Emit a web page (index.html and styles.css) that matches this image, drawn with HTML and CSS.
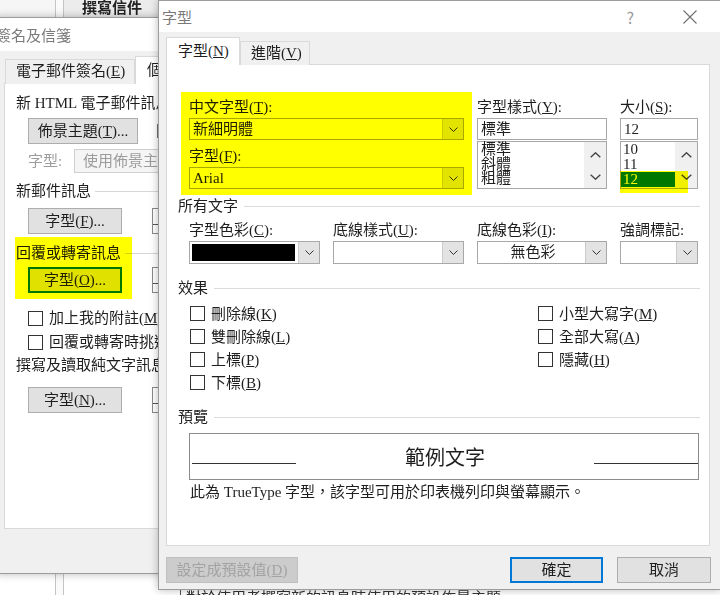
FILE: index.html
```html
<!DOCTYPE html>
<html lang="zh-Hant">
<head>
    <meta charset="UTF-8">
    <title>字型</title>
    <link rel="stylesheet" href="styles.css">
</head>
<body>
    <!-- outlook window behind both dialogs -->
    <div class="app">
        <div class="app-nav"></div>
        <div class="app-split"></div>
        <div class="app-main">
            <div class="app-head">撰寫信件</div>
            <div class="app-foot"><span class="foot-dash">一</span><span class="foot-bar"></span><span>對於使用者撰寫新的訊息時使用的預設佈景主題</span></div>
        </div>
    </div>

    <!-- 簽名及信箋 -->
    <div class="dlg sig">
        <div class="dlg-title">簽名及信箋</div>
        <div class="dlg-body">
            <div class="tabs">
                <div class="tab sig-tab">電子郵件簽名(<u>E</u>)</div>
                <div class="tab active sig-tab">個人信箋(<u>P</u>)</div>
            </div>
            <div class="panel sig-panel">
                <div class="sig-head">新 HTML 電子郵件訊息</div>
                <div class="sig-row">
                    <div class="btn w110"><span>佈景主題(<u>T</u>)...</span></div>
                    <span class="sig-note">目前沒有選取佈景主題</span>
                </div>
                <div class="sig-row sig-font">
                    <span class="dim-label">字型:</span>
                    <div class="dim-input">使用佈景主題的字型</div>
                </div>
                <div class="grp sig-grp"><span>新郵件訊息</span></div>
                <div class="sig-row r7">
                    <div class="btn"><span>字型(<u>F</u>)...</span></div>
                    <div class="sample"></div>
                </div>
                <div class="reply">
                    <div class="grp sig-grp"><span>回覆或轉寄訊息</span></div>
                    <div class="sig-row r4">
                        <div class="btn focus"><span>字型(<u>O</u>)...</span></div>
                        <div class="sample"></div>
                    </div>
                </div>
                <div class="chk sig-chk first"><span class="cb"></span><span>加上我的附註(<u>M</u>)</span></div>
                <div class="chk sig-chk"><span class="cb"></span><span>回覆或轉寄時挑選新的色彩(<u>C</u>)</span></div>
                <div class="sig-head r3">撰寫及讀取純文字訊息</div>
                <div class="sig-row r12">
                    <div class="btn"><span>字型(<u>N</u>)...</span></div>
                    <div class="sample"></div>
                </div>
            </div>
        </div>
    </div>

    <!-- 字型 -->
    <div class="dlg font">
        <div class="dlg-title">
            <span>字型</span>
            <span class="tb-help">?</span>
            <svg class="tb-close" width="14" height="14" viewBox="0 0 14 14"><path d="M0.5 0.5 L13.5 13.5 M13.5 0.5 L0.5 13.5" stroke="#6f6f6f" stroke-width="1.1" fill="none"/></svg>
        </div>
        <div class="dlg-body font-body">
            <div class="tabs font-tabs">
                <div class="tab active ft-tab">字型(<u>N</u>)</div>
                <div class="tab ft-tab2">進階(<u>V</u>)</div>
            </div>
            <div class="panel font-panel">
                <div class="ft-grid">
                    <div class="hl-block">
                        <div class="label">中文字型(<u>T</u>):</div>
                        <div class="combo">
                            <span class="combo-val">新細明體</span>
                            <span class="combo-btn"><svg width="9" height="5" viewBox="0 0 9 5"><path d="M0.5 0.5 L4.5 4.5 L8.5 0.5" stroke="#333" fill="none"/></svg></span>
                        </div>
                        <div class="label r6">字型(<u>F</u>):</div>
                        <div class="combo">
                            <span class="combo-val">Arial</span>
                            <span class="combo-btn"><svg width="9" height="5" viewBox="0 0 9 5"><path d="M0.5 0.5 L4.5 4.5 L8.5 0.5" stroke="#333" fill="none"/></svg></span>
                        </div>
                    </div>
                    <div class="ft-col">
                        <div class="label">字型樣式(<u>Y</u>):</div>
                        <div class="input">標準</div>
                        <div class="list">
                            <div class="list-items style-items">
                                <div>標準</div>
                                <div>斜體</div>
                                <div>粗體</div>
                            </div>
                            <div class="sbar">
                                <svg width="11" height="6" viewBox="0 0 11 6"><path d="M0.7 5.3 L5.5 0.8 L10.3 5.3" stroke="#444" stroke-width="1.4" fill="none"/></svg>
                                <svg width="11" height="6" viewBox="0 0 11 6"><path d="M0.7 0.7 L5.5 5.2 L10.3 0.7" stroke="#444" stroke-width="1.4" fill="none"/></svg>
                            </div>
                        </div>
                    </div>
                    <div class="ft-col">
                        <div class="label">大小(<u>S</u>):</div>
                        <div class="input">12</div>
                        <div class="list">
                            <div class="list-items size-items">
                                <div>10</div>
                                <div>11</div>
                                <div class="sel">12</div>
                            </div>
                            <div class="sbar">
                                <svg width="11" height="6" viewBox="0 0 11 6"><path d="M0.7 5.3 L5.5 0.8 L10.3 5.3" stroke="#444" stroke-width="1.4" fill="none"/></svg>
                                <svg width="11" height="6" viewBox="0 0 11 6"><path d="M0.7 0.7 L5.5 5.2 L10.3 0.7" stroke="#444" stroke-width="1.4" fill="none"/></svg>
                            </div>
                        </div>
                    </div>
                </div>

                <div class="grp ft-grp g1"><span>所有文字</span></div>
                <div class="ft-colors">
                    <div>
                        <div class="label">字型色彩(<u>C</u>):</div>
                        <div class="combo tall">
                            <span class="swatch"></span>
                            <span class="combo-btn"><svg width="9" height="5" viewBox="0 0 9 5"><path d="M0.5 0.5 L4.5 4.5 L8.5 0.5" stroke="#333" fill="none"/></svg></span>
                        </div>
                    </div>
                    <div>
                        <div class="label">底線樣式(<u>U</u>):</div>
                        <div class="combo tall">
                            <span class="combo-val"></span>
                            <span class="combo-btn"><svg width="9" height="5" viewBox="0 0 9 5"><path d="M0.5 0.5 L4.5 4.5 L8.5 0.5" stroke="#333" fill="none"/></svg></span>
                        </div>
                    </div>
                    <div>
                        <div class="label">底線色彩(<u>I</u>):</div>
                        <div class="combo tall">
                            <span class="combo-val center">無色彩</span>
                            <span class="combo-btn"><svg width="9" height="5" viewBox="0 0 9 5"><path d="M0.5 0.5 L4.5 4.5 L8.5 0.5" stroke="#333" fill="none"/></svg></span>
                        </div>
                    </div>
                    <div>
                        <div class="label">強調標記:</div>
                        <div class="combo tall">
                            <span class="combo-val"></span>
                            <span class="combo-btn"><svg width="9" height="5" viewBox="0 0 9 5"><path d="M0.5 0.5 L4.5 4.5 L8.5 0.5" stroke="#333" fill="none"/></svg></span>
                        </div>
                    </div>
                </div>

                <div class="grp ft-grp g2"><span>效果</span></div>
                <div class="effects">
                    <div class="fx-col">
                        <div class="chk"><span class="cb"></span><span>刪除線(<u>K</u>)</span></div>
                        <div class="chk"><span class="cb"></span><span>雙刪除線(<u>L</u>)</span></div>
                        <div class="chk"><span class="cb"></span><span>上標(<u>P</u>)</span></div>
                        <div class="chk"><span class="cb"></span><span>下標(<u>B</u>)</span></div>
                    </div>
                    <div class="fx-col">
                        <div class="chk"><span class="cb"></span><span>小型大寫字(<u>M</u>)</span></div>
                        <div class="chk"><span class="cb"></span><span>全部大寫(<u>A</u>)</span></div>
                        <div class="chk"><span class="cb"></span><span>隱藏(<u>H</u>)</span></div>
                    </div>
                </div>

                <div class="grp ft-grp g3"><span>預覽</span></div>
                <div class="pv-box">
                    <span class="pv-line"></span>
                    <span class="pv-text">範例文字</span>
                    <span class="pv-line"></span>
                </div>
                <div class="pv-note">此為 TrueType 字型，該字型可用於印表機列印與螢幕顯示。</div>
            </div>

            <div class="actions">
                <div class="btn btn-dis"><span>設定成預設值(<u>D</u>)</span></div>
                <div class="btn btn-ok">確定</div>
                <div class="btn btn-cancel">取消</div>
            </div>
        </div>
    </div>
</body>
</html>
```

FILE: styles.css
```css
* {
    box-sizing: border-box;
}

body {
    margin: 0;
    width: 720px;
    height: 595px;
    overflow: hidden;
    position: relative;
    background-color: #fff;
    font-family: "Liberation Serif", "Noto Sans CJK TC", serif;
    font-size: 15px;
    line-height: 20px;
    color: #1e1e1e;
}

u {
    text-decoration: underline;
}

/* background app window */
.app {
    position: absolute;
    top: 0;
    left: 0;
    width: 720px;
    height: 595px;
    display: flex;
}

.app-nav {
    width: 56px;
    border-right: 1px solid #c4c4c4;
    background: linear-gradient(#f6f6f6 0 17px, #fff 17px);
}

.app-split {
    width: 8px;
    border-right: 1px solid #c4c4c4;
    background-color: #fafafa;
}

.app-main {
    flex: 1;
    display: flex;
    flex-direction: column;
}

.app-head {
    height: 17px;
    padding-left: 18px;
    background-color: #ececec;
    font-family: "Noto Sans CJK TC", sans-serif;
    font-weight: bold;
    line-height: 13px;
    color: #222;
}

.app-foot {
    margin-top: auto;
    margin-bottom: -13px;
    padding-left: 96px;
    display: flex;
    align-items: center;
    white-space: nowrap;
    color: #333;
}

.foot-bar {
    width: 1px;
    height: 20px;
    margin: 0 5px;
    background-color: #555;
}

/* dialogs */
.dlg {
    position: absolute;
    display: flex;
    flex-direction: column;
    background-color: #f0f0f0;
    border: 1px solid #9c9c9c;
    box-shadow: 0 0 8px rgba(0, 0, 0, 0.28);
}

.dlg-title {
    display: flex;
    align-items: center;
    height: 32px;
    background-color: #fff;
    font-family: "Noto Sans CJK TC", sans-serif;
    color: #7a7a7a;
    white-space: nowrap;
}

.dlg-body {
    flex: 1;
    padding: 5px 7px 0;
}

.tabs {
    display: flex;
    align-items: flex-end;
    height: 28px;
    margin-bottom: -1px;
}

.tab {
    height: 25px;
    padding-left: 10px;
    border: 1px solid #d9d9d9;
    border-bottom: none;
    background-color: #f0f0f0;
    line-height: 22px;
    white-space: nowrap;
}

.tab.active {
    position: relative;
    height: 28px;
    background-color: #fff;
    line-height: 26px;
}

.panel {
    background-color: #fff;
    border: 1px solid #d9d9d9;
}

.btn {
    display: flex;
    align-items: center;
    justify-content: center;
    width: 94px;
    height: 26px;
    border: 1px solid #adadad;
    background-color: #e1e1e1;
    white-space: nowrap;
}

.w110 {
    width: 110px;
}

.btn.focus {
    border: 2px solid #0078d7;
}

.grp {
    display: flex;
    align-items: center;
    gap: 6px;
    height: 20px;
    white-space: nowrap;
}

.grp::after {
    content: "";
    flex: 1;
    height: 1px;
    background-color: #dcdcdc;
}

.chk {
    display: flex;
    align-items: center;
    gap: 6px;
    white-space: nowrap;
}

.cb {
    flex-shrink: 0;
    width: 15px;
    height: 15px;
    border: 1px solid #333;
    background-color: #fff;
}

/* 簽名及信箋 */
.sig {
    left: -4px;
    top: 17px;
    width: 480px;
    height: 557px;
}

.sig .dlg-title {
    text-indent: -1px;
    height: 33px;
}

.sig .tabs {
    padding-left: 1px;
}

.sig-tab {
    width: 130px;
}

.sig-tab.active {
    width: 120px;
    padding-left: 11px;
}

.sig-panel {
    height: 446px;
    padding: 9px 0 0 11px;
}

.sig-head {
    white-space: nowrap;
}

.sig-row {
    display: flex;
    align-items: center;
    height: 26px;
    margin-top: 5px;
    padding-left: 12px;
}

.sig-note {
    margin-left: 17px;
    white-space: nowrap;
}

.sig-font {
    height: 24px;
}

.dim-label {
    width: 46px;
    color: #9c9c9c;
}

.dim-input {
    width: 300px;
    height: 24px;
    padding-left: 8px;
    border: 1px solid #cfcfcf;
    background-color: #f5f5f5;
    color: #9c9c9c;
    line-height: 22px;
}

.sig-grp {
    margin-top: 8px;
    gap: 4px;
}

.sig-grp::after {
    background-color: #d6d6d6;
}

.r3 { margin-top: 3px; }
.r4 { margin-top: 4px; }
.r6 { margin-top: 6px; }
.r7 { margin-top: 7px; }
.r12 { margin-top: 12px; }

.sample {
    position: relative;
    flex-shrink: 0;
    width: 200px;
    height: 26px;
    margin-left: 30px;
    border: 1px solid #8a8a8a;
    background-color: #fff;
}

.sample::after {
    content: "";
    position: absolute;
    left: 0;
    top: 15px;
    width: 60px;
    height: 1px;
    background-color: #555;
}

.reply {
    position: relative;
    margin-top: 9px;
}

.reply .sig-grp {
    margin-top: 0;
}

/* marker highlight laid over the dialog */
.reply::after,
.hl-block::after,
.size-items .sel::after {
    content: "";
    position: absolute;
    background-color: #ffff00;
    mix-blend-mode: multiply;
    pointer-events: none;
}

.reply::after {
    left: -1px;
    top: -6px;
    width: 117px;
    height: 62px;
}

.sig-chk {
    height: 20px;
    margin-top: 4px;
    padding-left: 12px;
}

.sig-chk.first {
    margin-top: 15px;
}

/* 字型 */
.font {
    left: 158px;
    top: 0;
    width: 563px;
    height: 590px;
}

.font .dlg-title {
    height: 31px;
    padding-left: 3px;
}

.tb-help {
    margin-left: auto;
    margin-right: 49px;
    font-size: 16px;
    color: #9a9a9a;
}

.tb-close {
    margin-right: 23px;
}

.font-body {
    padding: 7px 9px 0 7px;
}

.font-tabs {
    height: 26px;
}

.ft-tab {
    width: 74px;
    height: 26px;
    padding-left: 11px;
    line-height: 24px;
}

.ft-tab2 {
    width: 70px;
    height: 24px;
    line-height: 22px;
}

.font-panel {
    width: 544px;
    height: 482px;
}

.ft-grid,
.ft-colors {
    display: grid;
    grid-template-columns: 131px 131px 130px 78px;
    column-gap: 13px;
    margin-left: 22px;
}

.ft-grid {
    margin-top: 27px;
}

.label {
    height: 20px;
    white-space: nowrap;
}

.hl-block {
    position: relative;
    grid-column: span 2;
    margin: 0 -8px;
    padding: 5px 8px 6px;
}

.hl-block::after {
    left: 0;
    top: 0;
    right: 0;
    bottom: 0;
}

.combo {
    display: flex;
    height: 22px;
    margin-top: 1px;
    border: 1px solid #a8a8a8;
    background-color: #fff;
}

.combo.tall {
    height: 23px;
}

.combo-val {
    flex: 1;
    padding-left: 3px;
    line-height: 20px;
    white-space: nowrap;
}

.combo-val.center {
    text-align: center;
}

.combo-btn {
    display: flex;
    align-items: center;
    justify-content: center;
    width: 21px;
    background-color: #e3e3e3;
    border-left: 1px solid #cbcbcb;
}

.swatch {
    flex: 1;
    margin: 2px 3px 2px 2px;
    background-color: #000;
}

.ft-col {
    padding-top: 5px;
}

.input {
    height: 22px;
    margin-top: 1px;
    padding-left: 3px;
    border: 1px solid #a8a8a8;
    background-color: #fff;
    line-height: 20px;
}

.list {
    display: flex;
    height: 48px;
    margin-top: 1px;
    border: 1px solid #a8a8a8;
    background-color: #fff;
}

.list-items {
    flex: 1;
}

.style-items {
    padding-left: 3px;
    line-height: 14.6px;
}

.size-items {
    line-height: 15px;
}

.size-items div {
    padding-left: 2px;
}

.size-items .sel {
    position: relative;
    background-color: #007800;
    color: #fff;
}

.size-items .sel::after {
    left: -1px;
    top: -1px;
    width: 68px;
    height: 22px;
}

.sbar {
    display: flex;
    flex-direction: column;
    align-items: center;
    justify-content: space-between;
    width: 22px;
    padding: 10px 0 8px;
    background-color: #f0f0f0;
}

.ft-grp {
    padding-left: 11px;
    margin-right: 9px;
}

.g1 { margin-top: 1px; }
.g2 { margin-top: 14px; }
.g3 { margin-top: 13px; }

.ft-colors {
    margin-top: 4px;
}

.effects {
    display: flex;
    margin: 4px 0 0 23px;
}

.fx-col {
    flex-shrink: 0;
}

.fx-col:first-child {
    width: 348px;
}

.fx-col .chk {
    height: 23px;
}

.pv-box {
    display: flex;
    align-items: flex-start;
    width: 510px;
    height: 47px;
    margin: 6px 0 0 22px;
    padding: 12px 0 0 2px;
    border: 1px solid #8c8c8c;
}

.pv-line {
    width: 104px;
    height: 1px;
    margin-top: 17px;
    background-color: #333;
}

.pv-text {
    flex: 1;
    text-align: center;
    font-size: 20px;
    line-height: 24px;
}

.pv-note {
    margin: 2px 0 0 23px;
    white-space: nowrap;
}

.actions {
    display: flex;
    margin-top: 11px;
}

.btn-dis {
    width: 132px;
    background-color: #cccccc;
    border-color: #bfbfbf;
    color: #a3a3a3;
}

.btn-ok {
    width: 93px;
    margin-left: auto;
    border: 2px solid #0078d7;
}

.btn-cancel {
    margin-left: 14px;
}
```
